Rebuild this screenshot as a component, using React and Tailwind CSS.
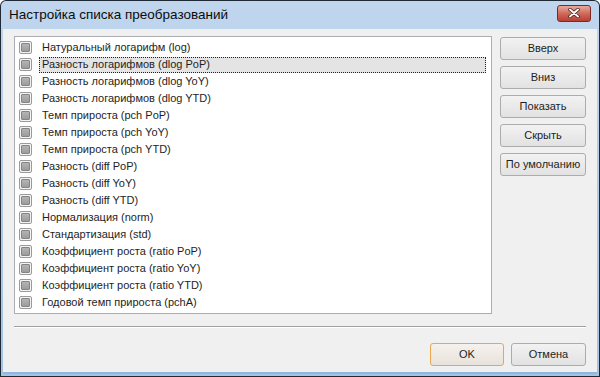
import React from "react";

const items = [
  "Натуральный логарифм (log)",
  "Разность логарифмов (dlog PoP)",
  "Разность логарифмов (dlog YoY)",
  "Разность логарифмов (dlog YTD)",
  "Темп прироста (pch PoP)",
  "Темп прироста (pch YoY)",
  "Темп прироста (pch YTD)",
  "Разность (diff PoP)",
  "Разность (diff YoY)",
  "Разность (diff YTD)",
  "Нормализация (norm)",
  "Стандартизация (std)",
  "Коэффициент роста (ratio PoP)",
  "Коэффициент роста (ratio YoY)",
  "Коэффициент роста (ratio YTD)",
  "Годовой темп прироста (pchA)",
];

const sideButtons = ["Вверх", "Вниз", "Показать", "Скрыть", "По умолчанию"];

const Check = () => (
  <div className="w-[13px] h-[13px] shrink-0 rounded-[2px] border border-[#9a9a9a] bg-[#f4f4f4] flex items-center justify-center">
    <div className="w-[9px] h-[9px] rounded-[1px] border border-[#858585] bg-gradient-to-b from-[#b4b4b4] to-[#9c9c9c]" />
  </div>
);

const Btn = ({ children, className = "" }) => (
  <button
    className={`h-[23px] whitespace-nowrap rounded-[3px] border border-[#acacac] bg-gradient-to-b from-[#f2f2f2] to-[#e2e2e2] text-[11px] text-[#1e1e1e] ${className}`}
  >
    {children}
  </button>
);

export default function App() {
  return (
    <div
      className="w-[600px] h-[377px] bg-[#1f2a36] p-px rounded-t-[6px]"
      style={{ fontFamily: '"Liberation Sans", Arial, sans-serif' }}
    >
      <div className="w-full h-full rounded-t-[5px] bg-gradient-to-b from-[#c0d6ee] via-[#b0cbe8] to-[#a6c3e3] flex flex-col px-[2px] pb-[2px]">
        <div className="h-[28px] shrink-0 flex items-center justify-between pl-[6px] pr-[6px]">
          <span className="text-[13.5px] text-[#0c0c0c]">
            Настройка списка преобразований
          </span>
          <div className="w-[34px] h-[17px] mt-[-4px] rounded-[3px] border border-[#7a2a25] bg-gradient-to-b from-[#e8a89c] via-[#cf6a5c] to-[#b93e30] flex items-center justify-center">
            <svg width="12" height="10" viewBox="0 0 12 10">
              <path d="M2 1.5 L10 8.5 M10 1.5 L2 8.5" stroke="#3a1410" strokeWidth="3.4" strokeLinecap="round" />
              <path d="M2 1.5 L10 8.5 M10 1.5 L2 8.5" stroke="#ffffff" strokeWidth="2" strokeLinecap="round" />
            </svg>
          </div>
        </div>
        <div className="flex-1 bg-[#f0f0f0] border-b-[2px] border-[#8fb6de] flex flex-col px-[11px] pt-[7px]">
          <div className="flex gap-[8px]">
            <div className="w-[480px] h-[278px] bg-white border border-[#abadb3] pt-[2px] pl-[4px] pr-[5px]">
              {items.map((t, i) => (
                <div key={t} className="h-[17px] flex items-center">
                  <Check />
                  <div
                    className={`ml-[7px] flex-1 h-[16px] flex items-center pl-[2px] text-[11px] text-[#1e1e1e] ${
                      i === 1 ? "bg-[#e4e4e4] border border-dotted border-[#202020]" : "border border-transparent"
                    }`}
                  >
                    {t}
                  </div>
                </div>
              ))}
            </div>
            <div className="flex flex-col gap-[6px] pt-px">
              {sideButtons.map((b) => (
                <Btn key={b} className="w-[86px]">
                  {b}
                </Btn>
              ))}
            </div>
          </div>
          <div className="mt-[12px] h-px bg-[#a0a0a0] border-b border-white box-content" />
          <div className="flex justify-end gap-[7px] mt-[15px]">
            <Btn className="w-[74px] border-[#e8a552] from-[#f5f1ec] to-[#e8e2dc]">OK</Btn>
            <Btn className="w-[75px]">Отмена</Btn>
          </div>
        </div>
      </div>
    </div>
  );
}
